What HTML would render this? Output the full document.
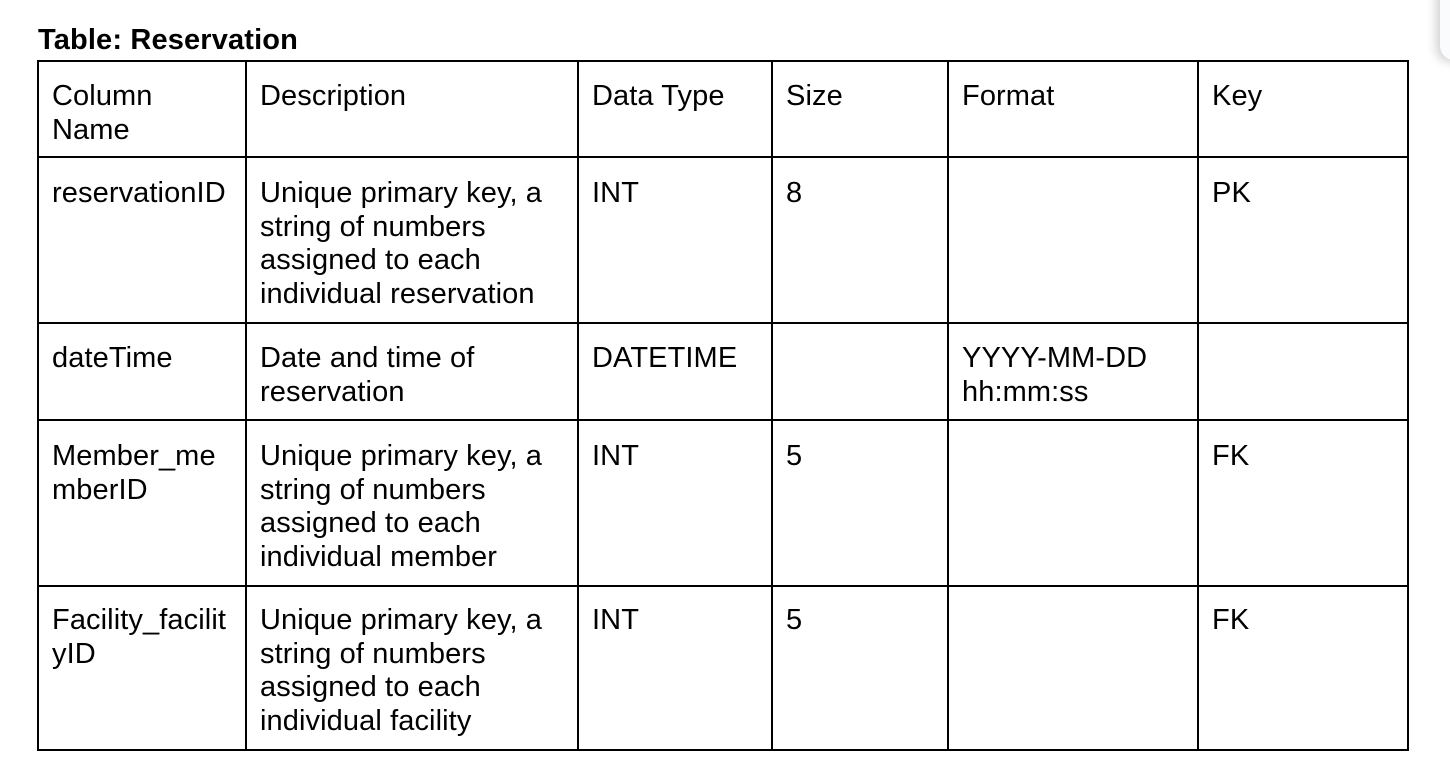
<!DOCTYPE html>
<html><head><meta charset="utf-8"><style>
html,body{margin:0;padding:0;background:#fff;width:1450px;height:782px;overflow:hidden;position:relative;font-family:"Liberation Sans",Arial,sans-serif;color:#000}
.v{position:absolute;width:2px;background:#000;top:60px;height:691px}
.h{position:absolute;height:2px;background:#000;left:37px;width:1372px}
.t{position:absolute;font-size:29px;line-height:33.7px;white-space:nowrap;letter-spacing:0.1px}
.title{position:absolute;left:38px;top:24px;font-size:29px;font-weight:bold;line-height:33px;letter-spacing:0.15px}
.card{position:absolute;left:1440px;top:-20px;width:40px;height:80px;border-radius:14px;background:#fafbfd;box-shadow:-4px 2px 10px rgba(0,0,0,0.18)}
</style></head><body>
<div class="title">Table: Reservation</div>
<div class="card"></div>
<div class="v" style="left:37px"></div>
<div class="v" style="left:245px"></div>
<div class="v" style="left:577px"></div>
<div class="v" style="left:771px"></div>
<div class="v" style="left:947px"></div>
<div class="v" style="left:1197px"></div>
<div class="v" style="left:1407px"></div>
<div class="h" style="top:60px"></div>
<div class="h" style="top:156px"></div>
<div class="h" style="top:322px"></div>
<div class="h" style="top:419px"></div>
<div class="h" style="top:585px"></div>
<div class="h" style="top:749px"></div>

<div class="t" style="left:52px;top:80px">Column<br>Name</div>
<div class="t" style="left:260px;top:80px">Description</div>
<div class="t" style="left:592px;top:80px">Data Type</div>
<div class="t" style="left:786px;top:80px">Size</div>
<div class="t" style="left:962px;top:80px">Format</div>
<div class="t" style="left:1212px;top:80px">Key</div>

<div class="t" style="left:52px;top:177px">reservationID</div>
<div class="t" style="left:260px;top:177px">Unique primary key, a<br>string of numbers<br>assigned to each<br>individual reservation</div>
<div class="t" style="left:592px;top:177px">INT</div>
<div class="t" style="left:786px;top:177px">8</div>
<div class="t" style="left:1212px;top:177px">PK</div>

<div class="t" style="left:52px;top:342px">dateTime</div>
<div class="t" style="left:260px;top:342px">Date and time of<br>reservation</div>
<div class="t" style="left:592px;top:342px">DATETIME</div>
<div class="t" style="left:962px;top:342px">YYYY-MM-DD<br>hh:mm:ss</div>

<div class="t" style="left:52px;top:440px">Member_me<br>mberID</div>
<div class="t" style="left:260px;top:440px">Unique primary key, a<br>string of numbers<br>assigned to each<br>individual member</div>
<div class="t" style="left:592px;top:440px">INT</div>
<div class="t" style="left:786px;top:440px">5</div>
<div class="t" style="left:1212px;top:440px">FK</div>

<div class="t" style="left:52px;top:604px">Facility_facilit<br>yID</div>
<div class="t" style="left:260px;top:604px">Unique primary key, a<br>string of numbers<br>assigned to each<br>individual facility</div>
<div class="t" style="left:592px;top:604px">INT</div>
<div class="t" style="left:786px;top:604px">5</div>
<div class="t" style="left:1212px;top:604px">FK</div>
</body></html>
